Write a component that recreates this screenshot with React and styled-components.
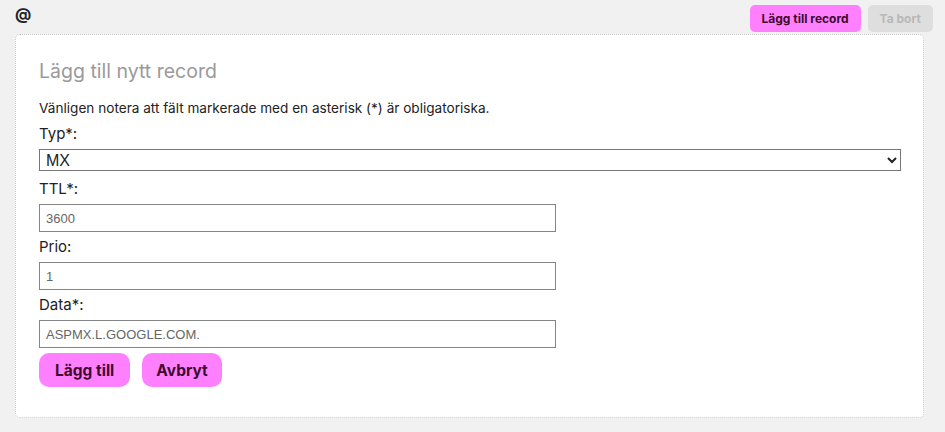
import React from "react";
import styled, { createGlobalStyle } from "styled-components";

const GlobalStyle = createGlobalStyle`
  body {
    margin: 0;
    background: #f1f1f1;
    font-family: Inter, "Noto Sans", sans-serif;
    color: #222;
  }
`;

const Page = styled.div`
  width: 945px;
  height: 432px;
  overflow: hidden;
`;

const TopBar = styled.div`
  display: flex;
  align-items: flex-start;
  justify-content: space-between;
  padding: 5px 12px 0 15px;
  height: 29px;
`;

const At = styled.span`
  font-size: 16px;
  font-weight: 700;
  line-height: 16px;
  margin-top: 1px;
`;

const Actions = styled.div`
  display: flex;
  gap: 7px;
`;

const SmallButton = styled.button`
  height: 27px;
  padding: 0 12px;
  border: none;
  border-radius: 5px;
  font-family: inherit;
  font-size: 12px;
  font-weight: 700;
  background: ${(p) => (p.disabled ? "#dedede" : "#ff80ff")};
  color: ${(p) => (p.disabled ? "#b8b8b8" : "#3d0a2e")};
`;

const Card = styled.div`
  margin: 0 21px 0 15px;
  background: #fff;
  border: 1px dotted #c8c8c8;
  border-radius: 5px;
  padding: 24px 23px 30px;
  display: flex;
  flex-direction: column;
  align-items: flex-start;
`;

const Title = styled.h2`
  margin: 0 0 16px;
  font-size: 19.5px;
  line-height: 24px;
  font-weight: 400;
  color: #9a9a9a;
`;

const Note = styled.p`
  margin: 0 0 7px;
  font-size: 13.6px;
  line-height: 18px;
`;

const Label = styled.label`
  display: block;
  font-size: 15px;
  line-height: 20px;
  margin: ${(p) => (p.first ? "0" : "5px")} 0 5px;
`;

const Select = styled.select`
  width: 862px;
  height: 22px;
  margin-bottom: 3px;
  border: 1px solid #767676;
  border-radius: 0;
  font-family: "Liberation Sans", Arial, sans-serif;
  font-size: 16px;
  color: #222;
  padding: 0 2px;
  background: #fff;
`;

const Input = styled.input`
  box-sizing: border-box;
  width: 517px;
  height: 28px;
  border: 1px solid #858585;
  border-radius: 0;
  padding: 1px 6px 0;
  font-family: "Liberation Sans", Arial, sans-serif;
  font-size: 13px;
  color: #666;
  outline: none;
`;

const ButtonRow = styled.div`
  display: flex;
  gap: 12px;
  margin-top: 5px;
`;

const PinkButton = styled.button`
  height: 34px;
  padding: 0 ${(p) => p.$pad}px;
  border: none;
  border-radius: 10px;
  background: #ff80ff;
  color: #3d0a2e;
  font-family: inherit;
  font-size: 15.5px;
  font-weight: 700;
`;

export default function App() {
  return (
    <Page>
      <GlobalStyle />
      <TopBar>
        <At>@</At>
        <Actions>
          <SmallButton>Lägg till record</SmallButton>
          <SmallButton disabled>Ta bort</SmallButton>
        </Actions>
      </TopBar>
      <Card>
        <Title>Lägg till nytt record</Title>
        <Note>Vänligen notera att fält markerade med en asterisk (*) är obligatoriska.</Note>
        <Label first>Typ*:</Label>
        <Select defaultValue="MX">
          <option>A</option>
          <option>AAAA</option>
          <option>CNAME</option>
          <option>MX</option>
          <option>TXT</option>
        </Select>
        <Label>TTL*:</Label>
        <Input defaultValue="3600" />
        <Label>Prio:</Label>
        <Input defaultValue="1" />
        <Label>Data*:</Label>
        <Input defaultValue="ASPMX.L.GOOGLE.COM." />
        <ButtonRow>
          <PinkButton $pad={16}>Lägg till</PinkButton>
          <PinkButton $pad={14}>Avbryt</PinkButton>
        </ButtonRow>
      </Card>
    </Page>
  );
}
